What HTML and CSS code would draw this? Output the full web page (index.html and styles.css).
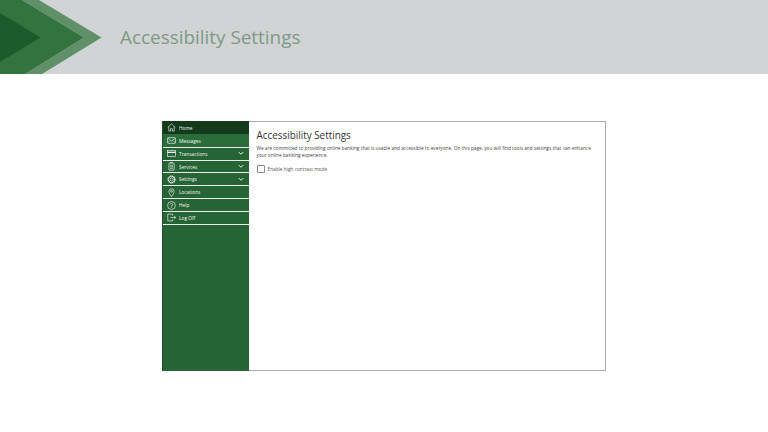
FILE: index.html
```html
<!DOCTYPE html>
<html lang="en">
<head>
<meta charset="utf-8">
<title>Accessibility Settings</title>
<link rel="stylesheet" href="styles.css">
</head>
<body>
<header class="banner">
  <svg class="chevrons" viewBox="0 0 102 74" aria-hidden="true">
    <polygon class="c-light" points="22,0 39,0 101.5,37.5 42,74 25,74 84,37.5"/>
    <polygon class="c-mid" points="0,0 22,0 84,37.5 25,74 0,74"/>
    <polygon class="c-dark" points="0,13 40.5,37.5 0,62"/>
  </svg>
  <h1 class="banner-title">Accessibility Settings</h1>
</header>
<main class="stage">
  <section class="panel">
    <nav class="side">
      <a class="item item-home"><svg class="ico" viewBox="0 0 12 12"><path d="M1 6 6 1.2 11 6M2.4 5v5.8h2.4V7.6h2.4v3.2h2.4V5"/></svg><span>Home</span></a>
      <a class="item item-active"><svg class="ico" viewBox="0 0 12 12"><rect x=".7" y="2.2" width="10.6" height="7.6" rx="1"/><path d="M1 3l5 3.6L11 3M1 9l3-3M11 9 8 6"/></svg><span>Messages</span></a>
      <a class="item"><svg class="ico" viewBox="0 0 12 12"><rect x=".7" y="2.2" width="10.6" height="7.6"/><path d="M.7 4.4h10.6" stroke-width="1.6"/></svg><span>Transactions</span><svg class="chev" viewBox="0 0 8 6"><path d="M1 1.4 4 4.4 7 1.4"/></svg></a>
      <a class="item"><svg class="ico" viewBox="0 0 12 12"><rect x="2.5" y="1.5" width="7" height="9.5" rx=".6"/><path d="M4 .8h4M4 4.5h4M4 6.5h4M4 8.5h4"/></svg><span>Services</span><svg class="chev" viewBox="0 0 8 6"><path d="M1 1.4 4 4.4 7 1.4"/></svg></a>
      <a class="item"><svg class="ico" viewBox="0 0 12 12"><circle cx="6" cy="6" r="2"/><circle cx="6" cy="6" r="4.4" stroke-width="1.8" stroke-dasharray="1.6 .7"/></svg><span>Settings</span><svg class="chev" viewBox="0 0 8 6"><path d="M1 1.4 4 4.4 7 1.4"/></svg></a>
      <a class="item"><svg class="ico" viewBox="0 0 12 12"><path d="M6 11.4C4 8.6 2.6 6.7 2.6 4.4a3.4 3.4 0 0 1 6.8 0C9.4 6.7 8 8.6 6 11.4Z"/><circle cx="6" cy="4.4" r="1.2"/></svg><span>Locations</span></a>
      <a class="item"><svg class="ico" viewBox="0 0 12 12"><circle cx="6" cy="6" r="5.2"/><path d="M4.4 4.6A1.6 1.6 0 1 1 6 6.4v1M6 8.4v1"/></svg><span>Help</span></a>
      <a class="item"><svg class="ico" viewBox="0 0 12 12"><path d="M7.5 3.4V1.5H1v9h6.5V8.6M4.5 6h7M9.6 4l2 2-2 2"/></svg><span>Log Off</span></a>
    </nav>
    <div class="content">
      <h2 class="content-title">Accessibility Settings</h2>
      <p class="intro">We are committed to providing online banking that is usable and accessible to everyone. On this page, you will find tools and settings that can enhance your online banking experience.</p>
      <label class="check"><span class="box"></span><span>Enable high contrast mode</span></label>
    </div>
  </section>
</main>
</body>
</html>
```
FILE: styles.css
```css
* { box-sizing: border-box; }
html, body { margin: 0; padding: 0; }
body { width: 768px; height: 432px; background: #fff; font-family: "Open Sans", "Noto Sans", sans-serif; overflow: hidden; }
.banner { height: 74px; background: #d1d3d4; display: flex; align-items: center; }
.chevrons { width: 102px; height: 74px; flex: none; display: block; }
.c-light { fill: #5f9068; }
.c-mid { fill: #33733f; }
.c-dark { fill: #1d5a2b; }
.banner-title { margin: 0 0 0 18px; font-size: 18.9px; font-weight: 400; line-height: 1; color: #7f9a87; white-space: nowrap; }
.stage { padding: 47px 0 0 162px; }
.panel { width: 444px; height: 250px; display: flex; border: 1px solid #a9abae; border-left: 0; }
.side { width: 86.5px; flex: none; background: #276435; display: flex; flex-direction: column; margin-top: -1px; margin-bottom: -1px; border-left: 1px solid #1e4f28; }
.item { height: 12.87px; display: flex; align-items: center; color: #f2f5f2; font-size: 4.8px; line-height: 7px; box-shadow: 0 1px 0 #e6efe7; padding: 1px 0 0 4px; flex: none; }
.item-home { background: #143a1c; box-shadow: none; }
.item-active { background: #2b6c3b; }
.item span { margin-left: 3px; flex: 1; padding-top: 1px; }
.ico { width: 9px; height: 9px; fill: none; stroke: #fff; stroke-width: .8; flex: none; }
.chev { width: 6px; height: 4.5px; fill: none; stroke: #e6efe7; stroke-width: 1.3; margin-right: 4.5px; flex: none; }
.content { flex: 1; padding: 6px 7px 0 8px; }
.content-title { margin: 0; font-size: 9.9px; font-weight: 400; line-height: 15px; color: #333; }
.intro { margin: 2px 0 0; font-size: 4.77px; line-height: 7px; color: #444; }
.check { margin-top: 6px; display: flex; align-items: center; gap: 3px; font-size: 4.77px; color: #555; }
.box { width: 8px; height: 8px; border: 1px solid #8a8a8a; border-radius: 1px; background: #fff; flex: none; }
```
